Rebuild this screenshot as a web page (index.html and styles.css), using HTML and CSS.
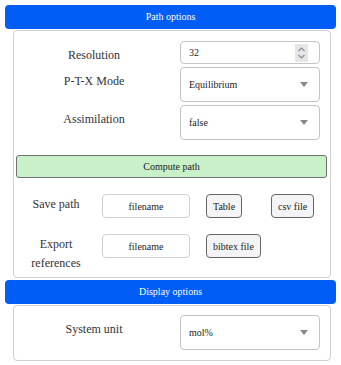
FILE: index.html
```html
<!DOCTYPE html>
<html lang="en">
<head>
  <meta charset="UTF-8" />
  <meta name="viewport" content="width=device-width, initial-scale=1.0"/>
  <title>Path options</title>
  <link rel="stylesheet" href="styles.css">
</head>
<body>

  <!-- Path options -->
  <div class="section-header">Path options</div>
  <div class="panel">
    <div class="form-grid">
      <div class="field-label">Resolution</div>
      <div class="number-wrap">
        <input type="number" class="text-field" value="32" />
        <span class="spinner">
          <svg width="13" height="18" viewBox="0 0 13 18">
            <path d="M3.5 7 L6.5 4 L9.5 7" fill="none" stroke="#8a8a8a" stroke-width="1.1"/>
            <path d="M3.5 11 L6.5 14 L9.5 11" fill="none" stroke="#8a8a8a" stroke-width="1.1"/>
          </svg>
        </span>
      </div>

      <div class="field-label">P-T-X Mode</div>
      <div class="select-wrap">
        <select class="select-field">
          <option>Equilibrium</option>
        </select>
      </div>

      <div class="field-label">Assimilation</div>
      <div class="select-wrap">
        <select class="select-field">
          <option>false</option>
        </select>
      </div>
    </div>

    <button class="compute-btn">Compute path</button>

    <div class="export-grid">
      <div class="export-label">Save path</div>
      <input type="text" class="name-input" placeholder="filename" />
      <button class="small-btn">Table</button>
      <button class="small-btn">csv file</button>

      <div class="export-label">Export<br>references</div>
      <input type="text" class="name-input" placeholder="filename" />
      <button class="small-btn">bibtex file</button>
    </div>
  </div>

  <!-- Display options -->
  <div class="section-header second">Display options</div>
  <div class="panel panel-display">
    <div class="form-grid">
      <div class="field-label">System unit</div>
      <div class="select-wrap">
        <select class="select-field">
          <option>mol%</option>
        </select>
      </div>
    </div>
  </div>

</body>
</html>
```

FILE: styles.css
```css
body {
  margin: 5px;
  background: white;
  color: #222;
  font-family: "Liberation Serif", "Times New Roman", serif;
}

.section-header {
  height: 24px;
  line-height: 24px;
  background-color: #005ef6;
  color: white;
  font-size: 10px;
  text-align: center;
  border-radius: 4px;
}

.section-header.second {
  margin-top: 2px;
}

.panel {
  margin: 1px 5px 0 8px;
  padding: 0 3px 4px 2px;
  border: 1px solid #cfcfcf;
  border-radius: 4px;
}

.form-grid {
  display: grid;
  grid-template-columns: 140px 140px;
  column-gap: 16px;
  row-gap: 3px;
  margin: 10px 7px 0 8px;
}

.field-label {
  font-family: "Liberation Serif", "Times New Roman", serif;
  font-size: 12px;
  line-height: 15px;
  padding-top: 7px;
  text-align: center;
  color: #333;
}

.number-wrap,
.select-wrap {
  position: relative;
}

.text-field,
.select-field {
  box-sizing: border-box;
  width: 100%;
  margin: 0;
  padding: 0 0 0 8px;
  border: 1px solid #c4c4c4;
  border-radius: 4px;
  background: white;
  color: #222;
  font-family: "Liberation Serif", serif;
  font-size: 10px;
  outline: none;
}

.text-field {
  height: 23px;
  -moz-appearance: textfield;
  appearance: textfield;
}

.text-field::-webkit-inner-spin-button,
.text-field::-webkit-outer-spin-button {
  -webkit-appearance: none;
  margin: 0;
}

.spinner {
  position: absolute;
  top: 3px;
  right: 12px;
  width: 13px;
  height: 18px;
  background: #e6e6ea;
  display: flex;
}

.select-field {
  height: 35px;
  -webkit-appearance: none;
  appearance: none;
}

.select-wrap::after {
  content: "";
  position: absolute;
  right: 12px;
  top: 15px;
  border-left: 4.5px solid transparent;
  border-right: 4.5px solid transparent;
  border-top: 5px solid #888;
}

.compute-btn {
  display: block;
  box-sizing: border-box;
  width: 100%;
  height: 23px;
  margin-top: 15px;
  padding: 0;
  background: #c8f0c9;
  border: 1px solid #707070;
  border-radius: 3px;
  color: #222;
  font-family: "Liberation Serif", serif;
  font-size: 10px;
}

.export-grid {
  display: grid;
  grid-template-columns: 80px 104px 71px 44px;
  row-gap: 16px;
  margin-top: 16px;
  align-items: start;
}

.export-label {
  font-family: "Liberation Serif", "Times New Roman", serif;
  font-size: 12px;
  line-height: 19px;
  text-align: center;
  padding-top: 1px;
  color: #333;
}

.name-input {
  box-sizing: border-box;
  width: 88px;
  height: 24px;
  margin: 0 0 0 6px;
  border: 1px solid #cdd2d8;
  border-radius: 4px;
  text-align: center;
  font-family: "Liberation Serif", serif;
  font-size: 10px;
  outline: none;
}

.name-input::placeholder {
  color: #222;
}

.small-btn {
  box-sizing: border-box;
  height: 24px;
  margin: 0 0 0 6px;
  padding: 0 6px;
  justify-self: start;
  background: #f4f4f6;
  border: 1px solid #666;
  border-radius: 4px;
  color: #222;
  font-family: "Liberation Serif", serif;
  font-size: 10px;
}

.small-btn + .small-btn {
  margin-left: 0;
}

.panel-display {
  padding-bottom: 10px;
}

.panel-display .form-grid {
  margin-top: 9px;
}
```
